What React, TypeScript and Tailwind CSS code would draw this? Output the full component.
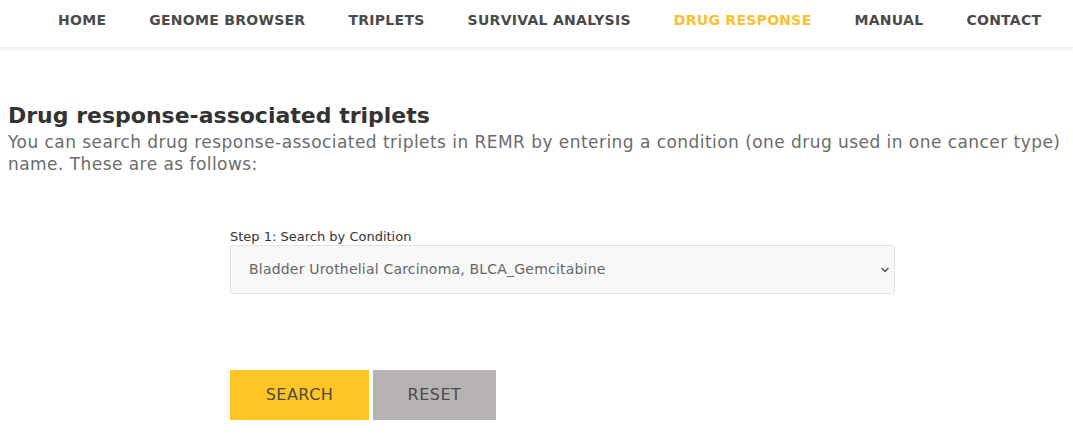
import { ChevronDown } from "lucide-react";

const nav = [
  "HOME",
  "GENOME BROWSER",
  "TRIPLETS",
  "SURVIVAL ANALYSIS",
  "DRUG RESPONSE",
  "MANUAL",
  "CONTACT",
];

const body = { fontFamily: '"DejaVu Sans", "Open Sans", sans-serif' };
const heading = { fontFamily: '"DejaVu Sans", "Noto Sans", sans-serif' };

export default function App() {
  return (
    <div className="min-h-[435px] bg-white" style={body}>
      <header className="h-[48px] flex items-start pt-[11px] pl-[58px] gap-[43px] shadow-[0_2px_4px_rgba(0,0,0,0.06)] border-b border-[#eeeeee]">
        {nav.map((n) => (
          <a
            key={n}
            className={`text-[14px] font-bold tracking-[0.28px] leading-[18px] whitespace-nowrap ${
              n === "DRUG RESPONSE" ? "text-[#fdbf2d]" : "text-[#4a4a4a]"
            }`}
          >
            {n}
          </a>
        ))}
      </header>

      <main className="px-2 pt-[53px]">
        <h1 className="text-[22px] font-bold text-[#333333] leading-[30px]" style={heading}>
          Drug response-associated triplets
        </h1>
        <p className="text-[17px] tracking-[0.45px] text-[#6b6b6b] leading-[22px] pr-[2px]">
          You can search drug response-associated triplets in REMR by entering a condition (one drug used in one cancer
          type) name. These are as follows:
        </p>

        <div className="ml-[222px] w-[665px] mt-[54px]">
          <label className="block text-[13px] text-[#333333] leading-[16px]" style={heading}>
            Step 1: Search by Condition
          </label>
          <div className="h-[49px] border border-[#e3e3e3] bg-[#f8f8f8] rounded-[2px] flex items-center pl-[18px] pr-[3px]">
            <span className="flex-1 text-[14px] tracking-[0.2px] text-[#666666]" style={heading}>
              Bladder Urothelial Carcinoma, BLCA_Gemcitabine
            </span>
            <ChevronDown className="w-3 h-3 text-[#555555]" strokeWidth={3} />
          </div>

          <div className="flex gap-[4px] mt-[76px]">
            <button className="w-[139px] h-[50px] bg-[#fec524] text-[#4a4a4a] text-[16px] tracking-[0.5px]">SEARCH</button>
            <button className="w-[123px] h-[50px] bg-[#b6b2b2] text-[#4a4a4a] text-[16px] tracking-[0.5px]">RESET</button>
          </div>
        </div>
      </main>
    </div>
  );
}
